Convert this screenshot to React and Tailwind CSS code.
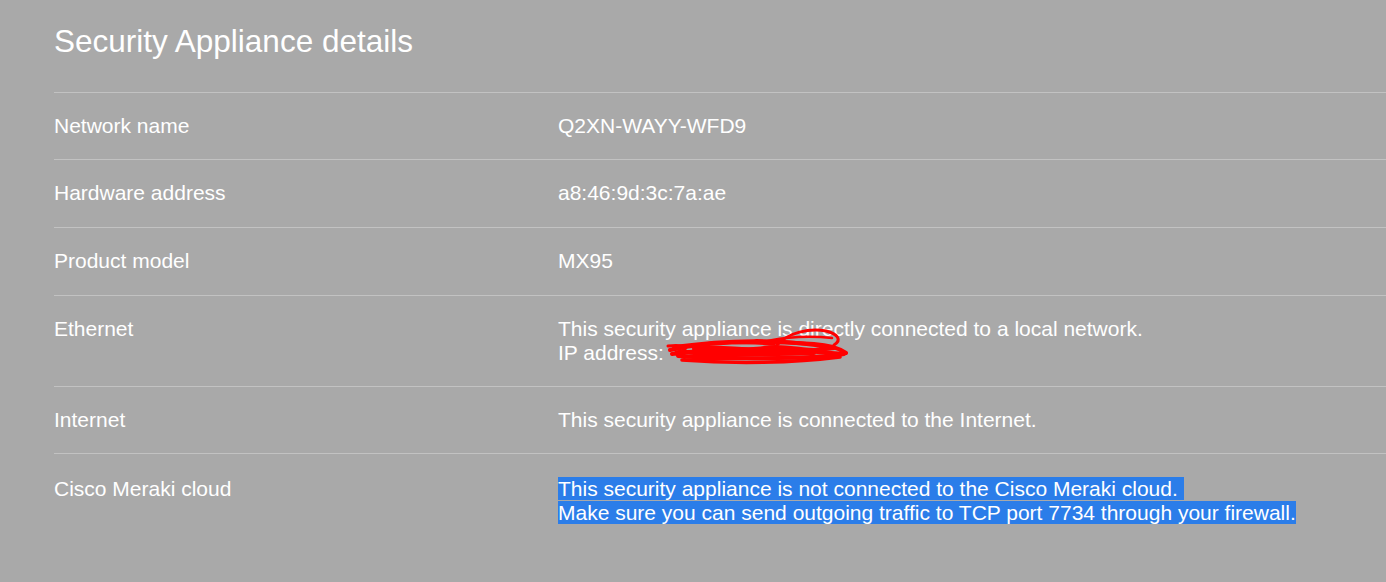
export default function App() {
    const rows = [
        { label: 'Network name', value: ['Q2XN-WAYY-WFD9'], pad: 'pt-[21px] pb-[21px]' },
        { label: 'Hardware address', value: ['a8:46:9d:3c:7a:ae'], pad: 'pt-[21px] pb-[22px]' },
        { label: 'Product model', value: ['MX95'], pad: 'pt-[21px] pb-[22px]' },
    ];

    return (
        <div className="min-h-[582px] w-full bg-[#a9a9a9] pl-[54px] text-white overflow-hidden" style={{ fontFamily: '"Liberation Sans", Arial, sans-serif' }}>
            <h1 className="pt-[23px] pb-[33px] text-[31.5px] leading-[36px] font-normal">Security Appliance details</h1>

            <div className="border-t border-[#c2c2c2]">
                {rows.map((r) => (
                    <div key={r.label} className={`flex border-b border-[#c2c2c2] text-[21px] leading-[24px] ${r.pad}`}>
                        <div className="w-[504px] shrink-0">{r.label}</div>
                        <div>{r.value}</div>
                    </div>
                ))}

                {/* Ethernet */}
                <div className="flex border-b border-[#c2c2c2] py-[21px] text-[21px] leading-[24px]">
                    <div className="w-[504px] shrink-0">Ethernet</div>
                    <div>
                        <div>This security appliance is directly connected to a local network.</div>
                        <div className="relative">
                            IP address:
                            {/* redaction scribble */}
                            <svg className="absolute left-[106px] top-[-15px]" width="190" height="40" viewBox="0 0 190 40" fill="none" stroke="#ff0000" strokeLinecap="round" strokeLinejoin="round">
                                <path d="M6 24 C40 16 90 14 150 18 C165 19 175 22 182 27" strokeWidth="4" />
                                <path d="M8 28 C50 22 110 22 180 28 C160 32 80 34 14 30" strokeWidth="4" />
                                <path d="M10 21 C60 14 120 12 170 22 C140 26 70 28 20 26" strokeWidth="4" />
                                <path d="M112 20 C124 6 146 2 162 5 C174 8 178 14 170 19" strokeWidth="3" />
                                <path d="M100 16 C120 10 150 10 168 12" strokeWidth="2.5" />
                                <path d="M18 34 C70 38 130 37 176 31" strokeWidth="3.5" />
                                <path d="M4 20 C20 18 30 23 12 26" strokeWidth="3" />
                                <path d="M30 23 C60 19 80 26 100 22 C120 18 140 26 160 24" strokeWidth="4" />
                                <path d="M20 31 C60 27 100 29 150 27" strokeWidth="4" />
                                <path d="M40 18 C60 15 90 17 110 18" strokeWidth="3" />
                                <path d="M24 34 C60 31 110 33 160 31" strokeWidth="3" />
                            </svg>
                        </div>
                    </div>
                </div>

                <div className="flex border-b border-[#c2c2c2] py-[21px] text-[21px] leading-[24px]">
                    <div className="w-[504px] shrink-0">Internet</div>
                    <div>This security appliance is connected to the Internet.</div>
                </div>

                <div className="flex pt-[23px] pb-[21px] text-[21px] leading-[24px]">
                    <div className="w-[504px] shrink-0">Cisco Meraki cloud</div>
                    <div>
                        <span className="bg-[#2b7de9]">This security appliance is not connected to the Cisco Meraki cloud.&nbsp;</span>
                        <br />
                        <span className="bg-[#2b7de9]">Make sure you can send outgoing traffic to TCP port 7734 through your firewall.</span>
                    </div>
                </div>
            </div>
        </div>
    );
}
